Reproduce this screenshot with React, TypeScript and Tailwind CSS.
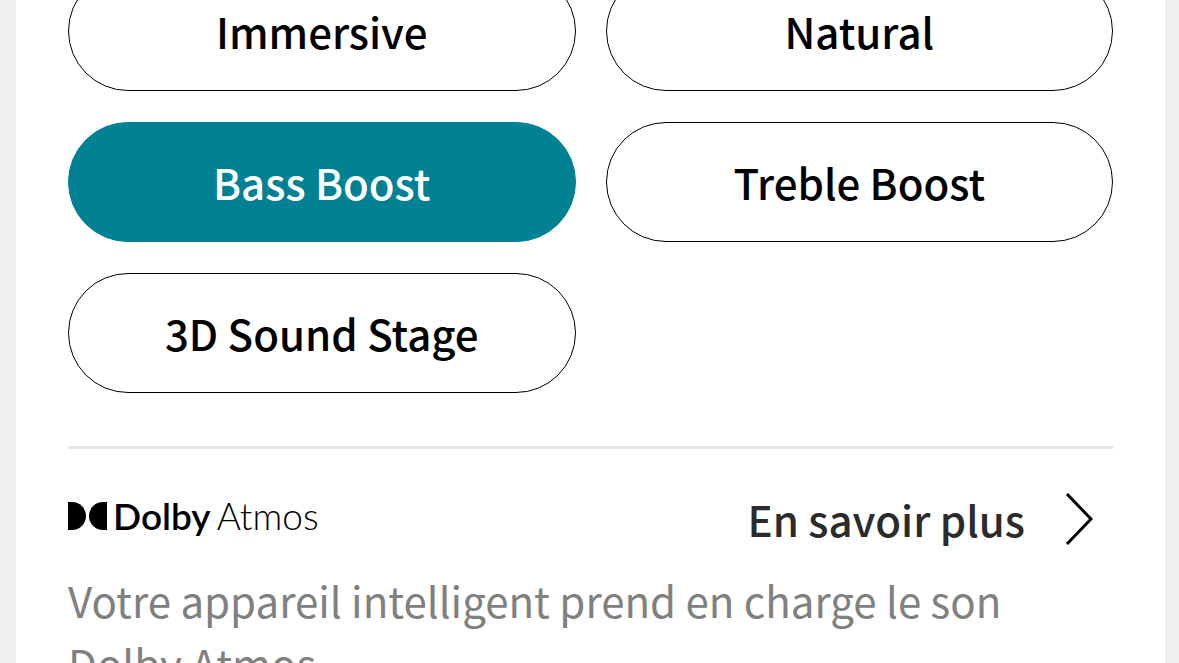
import { useState } from "react";

const modes = ["Immersive", "Natural", "Bass Boost", "Treble Boost", "3D Sound Stage"];

function DolbyLogo() {
  return (
    <div className="flex items-center gap-1.5 pb-1.5 text-black">
      <svg width="39" height="28" viewBox="0 0 39 28" fill="currentColor" aria-hidden="true">
        <path d="M0 0h4a14 14 0 0 1 0 28H0z" />
        <path d="M39 0h-4a14 14 0 0 0 0 28h4z" />
      </svg>
      <p className="flex gap-1.5 whitespace-nowrap font-['Lato',sans-serif] text-[37px] leading-10">
        <span className="font-semibold">Dolby</span>
        <span className="font-light">Atmos</span>
      </p>
    </div>
  );
}

export default function App() {
  const [activeMode, setActiveMode] = useState("Bass Boost");

  return (
    <div className="h-screen overflow-hidden bg-[#efefef] pl-4 pr-[14px] font-['Noto_Sans_CJK_SC','Noto_Sans_CJK_JP',sans-serif]">
      <main className="flex min-h-full flex-col bg-white px-[52px]">
        <div className="-mt-[29px] grid grid-cols-2 gap-x-[30px] gap-y-[31px]">
          {modes.map((mode) => (
            <button
              key={mode}
              type="button"
              aria-pressed={activeMode === mode}
              onClick={() => setActiveMode(mode)}
              className={`h-[120px] cursor-pointer rounded-full border text-[42px] leading-[60px] font-medium ${activeMode === mode ? "border-[#008294] bg-[#008294] text-white" : "border-black bg-white text-black"}`}
            >
              {mode}
            </button>
          ))}
        </div>

        <hr className="mt-[53px] border-t-[3px] border-[#e6e6e6]" />

        <section className="mt-[38px]">
          <div className="flex h-16 items-center justify-between">
            <DolbyLogo />
            <a href="#dolby-atmos" className="flex items-center gap-10 pr-5 text-[42px] leading-[60px] font-medium text-[#2b2b2b]">
              En savoir plus
              <svg width="28" height="54" viewBox="0 0 28 54" fill="none" stroke="black" strokeWidth="3" aria-hidden="true">
                <path d="M2 2L26 27L2 52" />
              </svg>
            </a>
          </div>
          <p className="mt-[17px] text-[42px] leading-[63px] font-normal text-[#808080]">
            Votre appareil intelligent prend en charge le son Dolby Atmos.
          </p>
        </section>
      </main>
    </div>
  );
}
